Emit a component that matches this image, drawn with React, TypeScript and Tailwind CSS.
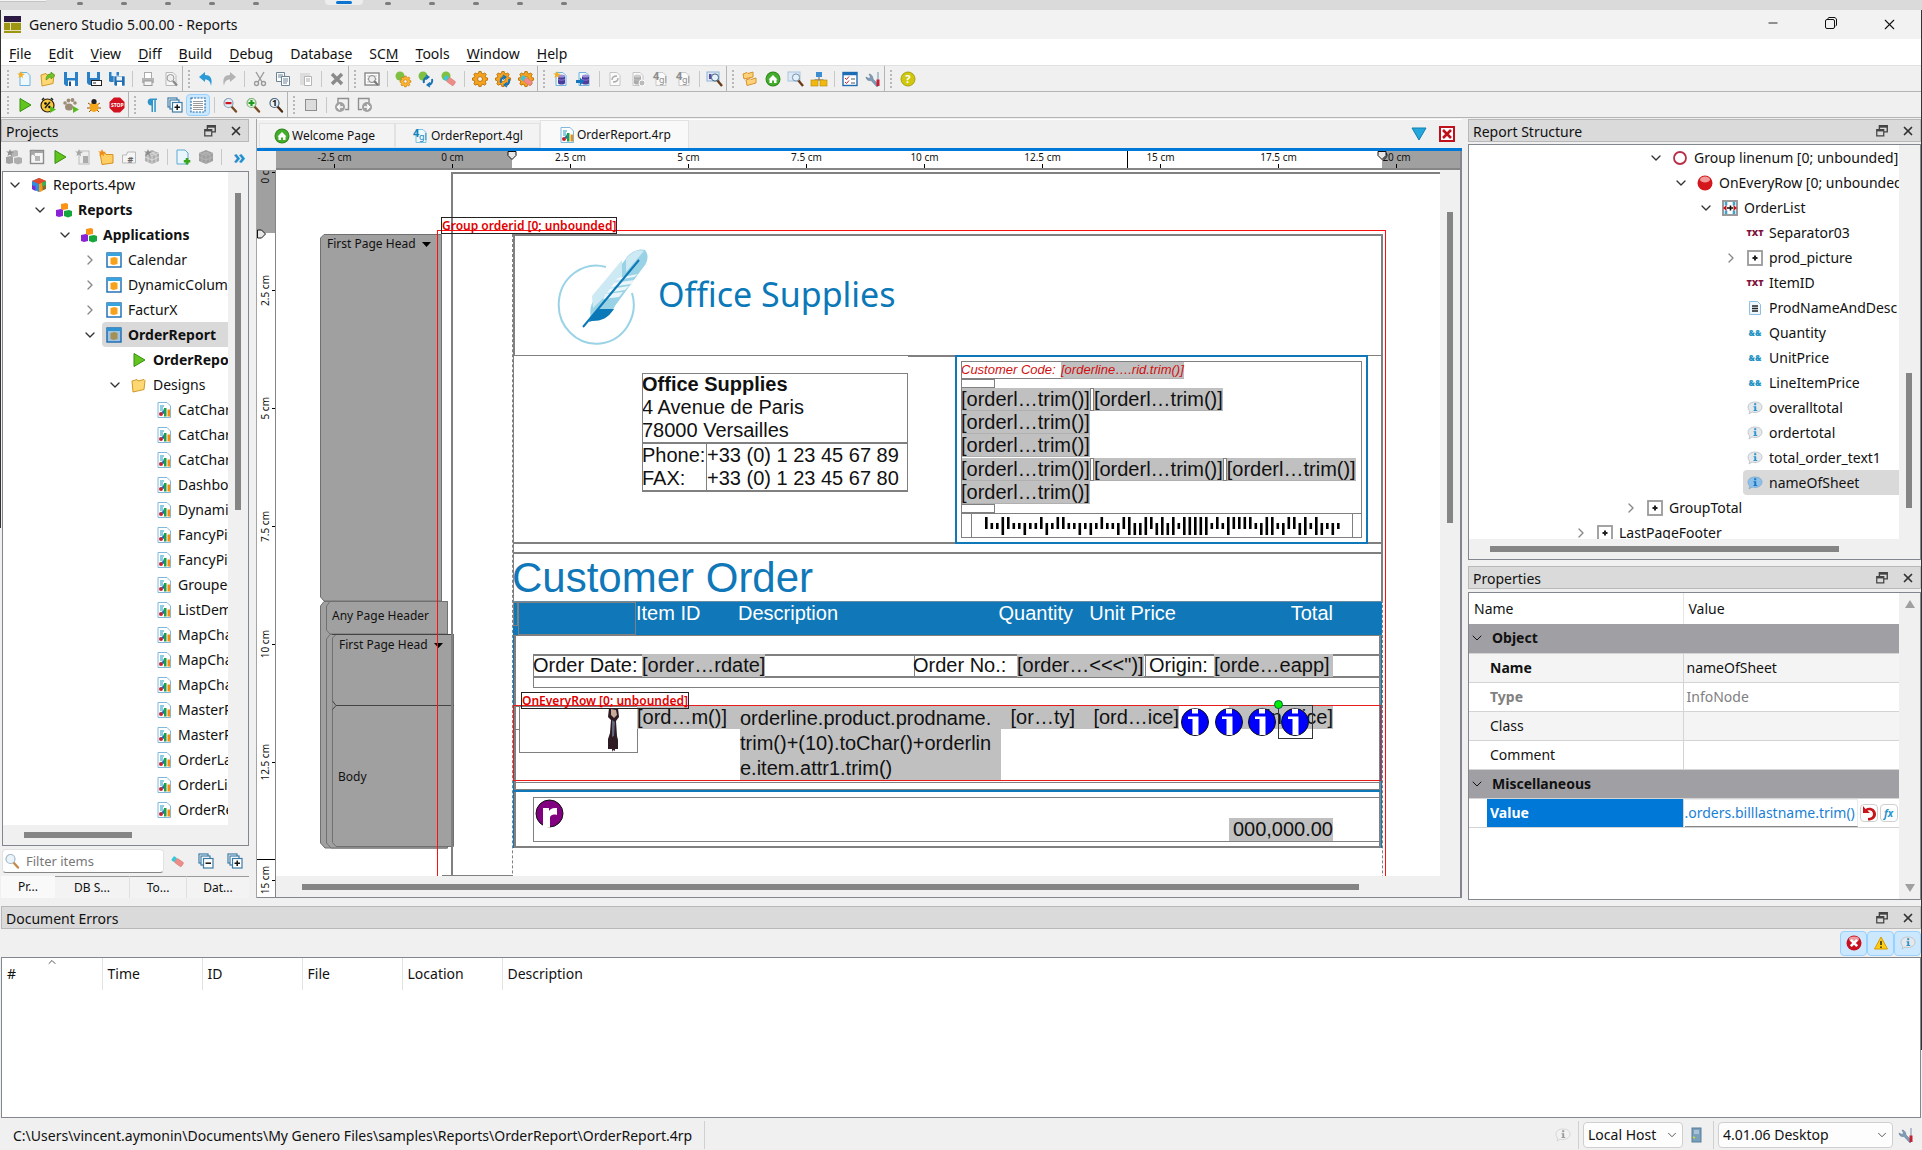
import React from 'react';
import { ChevronDown, ChevronRight, ChevronUp, X, Minus } from 'lucide-react';

/* ---------- Icons (16 x 16 grid) ---------- */

const page = (fill: string, stroke: string) => (
  <path d="M3 1.5h7l3 3v10H3z" fill={fill} stroke={stroke} />
);

const gear = (x: number, y: number, s: number, fill: string, stroke: string) => (
  <g transform={`translate(${x} ${y}) scale(${s})`}>
    <path
      d="M6.8 0h2.4l.5 2 1.5.6L13 1.5 14.6 3.200 13.500 5l.5 1.500 2 .4v2.300l-2 .5-.6 1.500 1.100 1.800-1.700 1.600-1.700-1.100-1.500.6-.5 1.900H6.800l-.5-1.900-1.500-.6-1.800 1.100L1.400 13l1.100-1.800L1.900 9.700 0 9.200V6.900l1.900-.4.6-1.500L1.400 3.200 3 1.500l1.800 1.100 1.500-.6z"
      fill={fill}
      stroke={stroke}
    />
    <circle cx="8" cy="8" r="2.6" fill="#f3f3f3" stroke={stroke} />
  </g>
);

const recycle = (
  <g fill="none" stroke="#1672b5" strokeWidth="2">
    <path d="M6 12c-1-3 1-6 4-6" />
    <path d="M14 8c1 3-1 6-4 6" />
    <path d="M8 4l3 2-3 2.500M12 16l-3-2 3-2.500" strokeWidth="1.200" />
  </g>
);

const eraser = (x: number, y: number) => (
  <g transform={`translate(${x} ${y}) rotate(35)`}>
    <rect x="0" y="0" width="4" height="5" rx="1" fill="#3cc6d8" />
    <rect x="4" y="0" width="8" height="5" rx="1" fill="#ee8d88" stroke="#d4706b" strokeWidth=".5" />
  </g>
);

const lens = (fill: string, stroke: string, handle: string) => (
  <>
    <path d="M9.500 9.500l4.500 5" stroke={handle} strokeWidth="2.400" strokeLinecap="round" />
    <circle cx="6.500" cy="6" r="4.500" fill={fill} stroke={stroke} strokeWidth="1.200" />
  </>
);

const cylinder = (x: number, fill: string, top: string) => (
  <g transform={`translate(${x} 0)`}>
    <path d="M3 5v7c0 2 7 2 7 0V5z" fill={fill} />
    <ellipse cx="6.500" cy="5" rx="3.500" ry="1.600" fill={top} />
    <path d="M3 8c0 1.500 7 1.500 7 0" fill="none" stroke={top} strokeWidth=".8" />
  </g>
);

const sparkle = (fill: string) => <path d="M4 0l1 2.500L8 3 5.500 4.500 6 7.500 4 5.500 1.500 7l.8-3L0 2.500 3 2.500z" fill={fill} />;

const cubes = (a: string, b: string, c: string) => (
  <>
    <path d="M5 2l5-1 2 1v5l-5 1-2-1z" fill={a} />
    <path d="M0 8l5-1 2 1v6l-4 1-3-1z" fill={b} />
    <path d="M8 9l5-1 3 1v5l-4 1.500-4-1.500z" fill={c} />
  </>
);

const gridBox = (fill: string, stroke: string) => (
  <>
    <path d="M1 4l7-3 7 3v8l-7 3-7-3z" fill={fill} />
    <path d="M1 4l7 2.500L15 4M8 6.500V15M4 2.500l8 3v8M12 2.500l-8 3v8M1 8l7 3 7-3" fill="none" stroke={stroke} strokeWidth=".8" />
  </>
);

const infoBubble = (fill: string, stroke: string, dot: string) => (
  <>
    <path d="M8 2c4 0 7 2 7 5s-3 5.500-7 5.500c-1 0-2 0-3-.4L2 14l.8-3C1.500 10 1 8.500 1 7c0-3 3-5 7-5z" fill={fill} stroke={stroke} strokeWidth=".8" />
    <rect x="7.200" y="3.200" width="2" height="2" fill={dot} />
    <path d="M6.500 6.200h2.700V10h1v1H6.500v-1h.8V7.200h-.8z" fill={dot} />
  </>
);

const reportPage = (
  <>
    <path d="M2 .5h9l3.500 3.500v11.500H2z" fill="#fff" stroke="#7fb8dc" />
    <path d="M4 4h4M4 6h3M4 8h4" stroke="#1e9ac0" strokeWidth="1.200" />
    <circle cx="5" cy="12" r="2" fill="#c8242a" />
    <path d="M5 10.500L8 8v4z" fill="#2b6ca8" />
    <rect x="8" y="6" width="2.500" height="8.500" fill="#19a04b" />
    <rect x="11.500" y="7.500" width="2.500" height="7" fill="#f58a0b" />
  </>
);

const folder = (
  <path d="M1 4l5-1.500 1 1.500 6-1.500 1 1-1 9L2 15z" fill="#ffd874" stroke="#cf9a2a" />
);

const stack = (sign: string) => (
  <g fill="#fff" stroke="#3c7ba6" strokeWidth="1.200">
    <rect x="1" y="1" width="9" height="9" />
    <rect x="3" y="3" width="9" height="9" />
    <rect x="5.500" y="5.500" width="9.500" height="9.500" />
    <path d={sign} stroke="#111" strokeWidth="1.500" />
  </g>
);

const icons = {
  newFile: <>{page('#eef8fd', '#6fb3da')}{sparkle('#f2b01e')}</>,
  open: <>{folder}<path d="M6 9c0-4 2-6 5-6V1l4 3.500L11 8V6C9 6 8 8 6 9z" fill="#6fc52a" stroke="#3c8a14" strokeWidth=".6" /></>,
  save: <><path d="M1 1h14v14H3l-2-2z" fill="#2b7fc4" /><rect x="4" y="1" width="8" height="6" fill="#e9f1f8" /><rect x="5" y="9.500" width="7" height="5.500" fill="#fff" /><rect x="6" y="10.500" width="2" height="4.500" fill="#1c4f80" /></>,
  saveAs: <><path d="M1 1h13v13H3l-2-2z" fill="#2b7fc4" /><rect x="4" y="1" width="7" height="6" fill="#e9f1f8" /><rect x="5.500" y="9.500" width="10" height="5" fill="#fff" stroke="#222" /><path d="M7 12h3" stroke="#222" /></>,
  saveAll: <><path d="M0 1h10v10H1l-1-1z" fill="#2b7fc4" /><rect x="2.500" y="1" width="5" height="4" fill="#e9f1f8" /><path d="M5 5h11v10H6l-1-1z" fill="#1f6db0" stroke="#fff" strokeWidth=".6" /><rect x="7.500" y="5.500" width="5.500" height="4" fill="#e9f1f8" /><rect x="8" y="11" width="5" height="4" fill="#fff" /></>,
  print: <><rect x="4.500" y="1.500" width="7" height="6" fill="#fff" stroke="#aaa" /><path d="M2 7h12v5H2z" fill="#b5b5b5" /><rect x="4" y="10" width="8" height="4.500" fill="#f4f4f4" stroke="#999" /></>,
  preview: <>{page('#f6f6f6', '#b9b9b9')}<path d="M10 10l4 4.500" stroke="#888" strokeWidth="2.200" /><circle cx="7.500" cy="7" r="3.500" fill="#eee" stroke="#999" /></>,
  undo: <path d="M1 6l6-5v3c5 0 8 3 6 11-.5-4-2-6.500-6-6.500V11z" fill="#2b9bd6" />,
  redo: <path d="M15 6L9 1v3C4 4 1 7 3 15c.5-4 2-6.500 6-6.500V11z" fill="#b3b3b3" />,
  cut: <g fill="none" stroke="#9b9b9b" strokeWidth="1.400"><path d="M4 1l6 10M12 1L6 11" /><circle cx="4.500" cy="12.500" r="2" /><circle cx="11.500" cy="12.500" r="2" /></g>,
  copy: <g fill="#fff" stroke="#6c8397"><path d="M1.500 1.500h8v9h-8z" /><path d="M3 4h5M3 6h5" /><path d="M6.500 5.500h8v9h-8z" /><path d="M8 8h5M8 10h5M8 12h4" /></g>,
  paste: <><rect x="2" y="2" width="10" height="12" fill="#ddd" /><path d="M6.500 5.500h7v9h-7z" fill="#fff" stroke="#b5b5b5" /><path d="M8 8h4M8 10h4" stroke="#aaa" /></>,
  del: <path d="M3 3l10 10M13 3L3 13" stroke="#8a8a8a" strokeWidth="3.400" />,
  find: <><rect x="1" y="2" width="14" height="12" fill="#fff" stroke="#888" strokeWidth="1.400" /><path d="M3 5h10M3 8h10M3 11h10" stroke="#bbb" /><circle cx="8" cy="8" r="3.500" fill="#eee" stroke="#888" /><path d="M10 10l4 4" stroke="#777" strokeWidth="2" /></>,
  buildOne: <><circle cx="5" cy="5" r="4.500" fill="#7fc043" />{gear(5, 5, 0.68, '#ffb52e', '#c47b08')}</>,
  rebuildOne: <><circle cx="5" cy="5" r="4.500" fill="#7fc043" />{recycle}</>,
  cleanOne: <><circle cx="5" cy="5" r="4.500" fill="#7fc043" />{eraser(5, 4)}</>,
  buildAll: gear(0.5, 0.5, 0.94, '#f5a21f', '#bc7206'),
  rebuildAll: <>{gear(0.5, 0.5, 0.94, '#f5a21f', '#bc7206')}{recycle}</>,
  cleanAll: <>{gear(0.5, 0.5, 0.94, '#f5a21f', '#bc7206')}{eraser(5, 4)}</>,
  dbNew: <>{page('#eef8fd', '#6fb3da')}{cylinder(2, '#4d3c9c', '#9d90d8')}{sparkle('#f2b01e')}</>,
  dbImport: <>{page('#eef8fd', '#6fb3da')}{cylinder(3, '#4d3c9c', '#9d90d8')}<path d="M0 9h4V6.500L8 10.500 4 14.500V12H0z" fill="#1673bd" /></>,
  pageSync: <>{page('#fafafa', '#c5c5c5')}<path d="M5 9c0-3 2-4 5-4M11 7c0 3-2 4-5 4" fill="none" stroke="#aaa" strokeWidth="1.400" /></>,
  dbGray: <>{page('#fafafa', '#c5c5c5')}{cylinder(1, '#aaa', '#ccc')}<circle cx="12" cy="12" r="3" fill="#bbb" stroke="#fff" /></>,
  fglGray: <>{page('#fafafa', '#c9c9c9')}<text x="0" y="9" fontSize="11" fontWeight="700" fill="#8d8d8d">4</text><text x="6" y="12" fontSize="9" fill="#8d8d8d">gl</text></>,
  fgl: <>{page('#eef8fd', '#7cc0e0')}<text x="0" y="9" fontSize="11" fontWeight="700" fill="#1684b8">4</text><text x="6" y="12" fontSize="9" fill="#1684b8">gl</text></>,
  dbFind: <><rect x="0" y="1" width="12" height="9" fill="#dfe9f5" stroke="#8eb4d8" /><rect x="2" y="3" width="2.500" height="5" fill="#5a4ba5" /><path d="M10 9l5 6" stroke="#6d3a17" strokeWidth="2.400" /><circle cx="8" cy="6.500" r="3.600" fill="#e3f1fb" stroke="#44617c" /></>,
  codeFind: <><rect x="0" y="1" width="12" height="9" fill="#dfe9f5" stroke="#a9c6e0" /><path d="M10 9l5 6" stroke="#6d3a17" strokeWidth="2.400" /><circle cx="8" cy="6.500" r="3.600" fill="#e3f1fb" stroke="#7592ac" /></>,
  folders: <g fill="#ffd27a" stroke="#d6922e"><path d="M1 3l4-1.500 1 1L11 1v5L2 8z" /><path d="M4 9l4-1.500 1 1 5-1.500v5l-9 2.500z" /></g>,
  home: <><circle cx="8" cy="8" r="7.500" fill="#2f8a1c" /><circle cx="8" cy="8" r="6.500" fill="#45ad2e" /><path d="M3.500 8.500L8 4l4.500 4.500H11.500V12H9V9.500H7V12H4.500V8.500z" fill="#fff" /></>,
  diagram: <><path d="M8 6v3M3.500 11V9h9v2" stroke="#666" fill="none" /><rect x="5" y="1" width="6" height="5" fill="#3b8ed2" /><rect x="0" y="9" width="7" height="6" fill="#f1b90f" stroke="#b5860a" strokeWidth=".6" /><rect x="9" y="9" width="7" height="6" fill="#f1b90f" stroke="#b5860a" strokeWidth=".6" /></>,
  checklist: <><rect x="1" y="1.500" width="14" height="13" fill="#fff" stroke="#1d6cb4" strokeWidth="1.400" /><path d="M1 3h14" stroke="#1d6cb4" strokeWidth="2.500" /><path d="M3 7l1.500 1.500L7 5.500M3 11l1.500 1.500L7 9.500" fill="none" stroke="#c4202a" /><path d="M9 8h4M9 12h4" stroke="#555" /></>,
  tools: <><path d="M1 4c0 3 3 4 5 3.500L12 14l2-2-6-6C8 3 6 1 4 1l1.500 3L4 5.500z" fill="#7e9cb8" stroke="#58738c" strokeWidth=".5" transform="translate(0 2)" /><path d="M13 1v8" stroke="#8aa0b5" strokeWidth="1.200" /><rect x="11.500" y="8.500" width="3" height="6.500" fill="#c61f33" /></>,
  help: <><circle cx="8" cy="8" r="7" fill="#cfc80f" stroke="#aaa20a" /><text x="5.200" y="12" fontSize="11" fontWeight="700" fill="#fff">?</text></>,
  play: <path d="M3 1.500l11 6.500L3 14.500z" fill="#62c41e" stroke="#378f10" />,
  profile: <><circle cx="7.500" cy="8.500" r="6.500" fill="#f5c63e" stroke="#33200a" strokeWidth="1.200" /><path d="M2 3l2-2M11 1l2 2M5 11l5-6" stroke="#222" strokeWidth="1.600" /><circle cx="5.500" cy="6.500" r="1.300" /><circle cx="9.500" cy="10" r="1.300" /><path d="M10 9l6 3.500-6 3.500z" fill="#58bb1c" /></>,
  paws: <><g fill="#9d8c78"><ellipse cx="6" cy="10" rx="4" ry="3.500" /><circle cx="2" cy="6" r="1.800" /><circle cx="5.500" cy="3.500" r="1.900" /><circle cx="9.500" cy="3" r="1.900" /><circle cx="12" cy="6" r="1.800" /></g><path d="M10 9l6 3.500-6 3.500z" fill="#58bb1c" /></>,
  bug: <><path d="M2 6l3 2M14 6l-3 2M1 11h4M15 11h-4M3 15l3-3M13 15l-3-3" stroke="#8a5200" /><ellipse cx="8" cy="10" rx="4.500" ry="5" fill="#f7a51b" /><circle cx="8" cy="4.500" r="2.600" fill="#222" /></>,
  stop: <><path d="M5 .5h6L15.500 5v6L11 15.500H5L.5 11V5z" fill="#d3121f" /><text x="2" y="10" fontSize="5" fontWeight="700" fill="#fff">STOP</text></>,
  pilcrow: <path d="M7 1.500h6v1.500h-1.200V15h-1.500V3H9v12H7.500V8.500C2.500 8.500 2.500 1.500 7 1.500z" fill="#2f93cc" />,
  stackPlus: stack('M10.200 7.500v5.500M7.500 10.200H13'),
  stackMinus: stack('M7.500 10.200H13'),
  select: <><rect x="1" y="1" width="14" height="14" fill="#fff" stroke="#1f6ba6" strokeWidth="1.200" strokeDasharray="2 1.200" /><path d="M3 4.500h10M3 6.500h10M3 8.500h10M3 10.500h10M3 12.500h10" stroke="#9a9a9a" /></>,
  zoomOut: <>{lens('#e4eef7', '#8ba0b5', '#7a4a21')}<rect x="3.500" y="5" width="6" height="2.200" fill="#cf1420" /></>,
  zoomIn: <>{lens('#e4f4e0', '#7fae77', '#7a4a21')}<path d="M6.500 3v6M3.500 6h6" stroke="#1d9b1f" strokeWidth="2.200" /></>,
  zoomOne: <>{lens('#eaf4fb', '#4c6379', '#4d2a10')}<text x="4" y="9.200" fontSize="9" fontWeight="700" fill="#111">1</text></>,
  square: <rect x="2.500" y="2.500" width="11" height="11" fill="#dcdcdc" stroke="#8e8e8e" />,
  prev: <><path d="M4 6V1.500h10.500v11H11" fill="none" stroke="#8f8f8f" strokeWidth="1.400" /><circle cx="6" cy="10" r="5" fill="#a0a0a0" /><path d="M9 10H4M6 7.500L3.500 10 6 12.500" stroke="#fff" fill="none" strokeWidth="1.400" /></>,
  next: <><path d="M12 6V1.500H1.500v11H5" fill="none" stroke="#8f8f8f" strokeWidth="1.400" /><circle cx="10" cy="10" r="5" fill="#a0a0a0" /><path d="M7 10h5M10 7.500l2.500 2.500L10 12.500" stroke="#fff" fill="none" strokeWidth="1.400" /></>,
  cubesGray: <>{cubes('#b5b5b5', '#a2a2a2', '#aeaeae')}{sparkle('#8d8d8d')}</>,
  cubes: cubes('#fb9313', '#8b22d6', '#13a63c'),
  windowNew: <><rect x="1.500" y="1.500" width="13" height="13" fill="#f5f5f5" stroke="#8c8c8c" strokeWidth="1.400" /><path d="M2 3h12" stroke="#a5a5a5" strokeWidth="2" /><path d="M6 7h5v5H6z" fill="#b5b5b5" />{sparkle('#a5a5a5')}</>,
  pageAdd: <><rect x="4" y="2" width="10" height="13" fill="#eee" stroke="#bbb" /><rect x="8" y="7" width="5" height="7" fill="#aaa" />{sparkle('#a5a5a5')}</>,
  folderNew: <><path d="M2 4h5l1 1.500h7V14l-11 1.500z" fill="#ffcf63" stroke="#d98e1d" />{sparkle('#f08a12')}</>,
  folderHash: <><path d="M1.500 6h4l1-3h8v11h-13z" fill="#f5f5f5" stroke="#b9b9b9" /><text x="6.500" y="14" fontSize="9" fontWeight="700" fill="#666">#</text></>,
  boxGray: <>{gridBox('#aeaeae', '#e2e2e2')}{sparkle('#8d8d8d')}</>,
  boxGray2: gridBox('#9f9f9f', '#b9b9b9'),
  addFile: <><path d="M2 1h8l3 3v11H2z" fill="#eaf6fd" stroke="#5fa9d4" /><path d="M12 9v6.500M8.800 12.200h6.500" stroke="#3aa61b" strokeWidth="2.600" /></>,
  workspace: <><path d="M1 4l7-3v14l-7-3z" fill="#2f8ddb" /><path d="M8 1l7 3v8l-7 3z" fill="#8a6a2f" /><path d="M1 4l7-3 7 3-7 3z" fill="#e5482b" /><path d="M1 8l3.500 1.500V14L1 12z" fill="#7b2bd1" /><path d="M8 7l3.500-1.500V14L8 15z" fill="#f59a17" /><path d="M11.500 5.500L15 4v4l-3.500 1.500z" fill="#2fb457" /></>,
  app: <><rect x="1" y="1" width="14" height="14" fill="#fff" stroke="#1769b0" strokeWidth="1.400" /><path d="M1 2.500h14" stroke="#38a3dd" strokeWidth="3" /><path d="M4.500 6l4-1 3 1v6l-4 1-3-1z" fill="#f8a11a" /></>,
  appDim: <><rect x="1" y="1" width="14" height="14" fill="#9fc3e0" stroke="#1769b0" strokeWidth="1.400" /><path d="M1 2.500h14" stroke="#2f93d0" strokeWidth="3" /><path d="M4.500 6l4-1 3 1v6l-4 1-3-1z" fill="#a58f54" /></>,
  folder,
  report: reportPage,
  eraser: eraser(4, 3),
  search: lens('#eaf4fb', '#a5b6c5', '#c68a4c'),
  ring: <circle cx="8" cy="8" r="6" fill="#fff" stroke="#b53048" strokeWidth="1.800" />,
  ball: <><circle cx="8" cy="8" r="7.500" fill="#d3171c" /><ellipse cx="8" cy="4.500" rx="5" ry="3" fill="#f09a9a" /></>,
  hbox: <><rect x="1" y="1" width="14" height="14" fill="#fff" stroke="#9a9a9a" strokeWidth="2" /><path d="M4 2v3.500M4 10.500V14M12 2v3.500M12 10.500V14" stroke="#3ba4d0" strokeWidth="2.600" /><path d="M5 8h6M8.500 5.500v5" stroke="#111" strokeWidth="1.600" /><path d="M1 8l3.500-3v6zM15 8l-3.500-3v6z" fill="#c8141c" /></>,
  vbox: <><rect x="1" y="1" width="14" height="14" fill="#fff" stroke="#9a9a9a" strokeWidth="1.800" /><path d="M8 5.500v5M5.500 8h5" stroke="#222" strokeWidth="2" /></>,
  doc: <><path d="M2.500 1.500h8l3 3v10h-11z" fill="#eef8fd" stroke="#8cc0de" /><path d="M5 6h6M5 8.500h6M5 11h6" stroke="#222" strokeWidth="1.300" /></>,
  info: infoBubble('#e6e9ec', '#b9bec3', '#2f93cc'),
  infoBlue: infoBubble('#8dc0ea', '#7fa9cb', '#1c74c0'),
  infoGray: infoBubble('#f2f2f2', '#cfcfcf', '#9b9b9b'),
  error: <><circle cx="8" cy="8" r="7.500" fill="#c9101e" /><ellipse cx="8" cy="4" rx="5" ry="2.600" fill="#ec9aa2" /><path d="M4.800 4.800l6.400 6.400M11.200 4.800l-6.400 6.400" stroke="#fff" strokeWidth="2.600" /></>,
  warning: <><path d="M8 2l6.500 12h-13z" fill="#ffcf0f" stroke="#d69a07" /><path d="M8 6v4M8 11.500V13" stroke="#333" strokeWidth="1.600" /></>,
  revert: <path d="M2 1v7h7L6.500 5.700C9 4.500 12 6 12 9c0 2.500-2 4-5 4v2.500c5 0 8-2.500 8-6.500 0-5-6-8-10.500-5z" fill="#c9141b" />,
  server: <><rect x="4" y="1" width="9" height="14" fill="#7ba0bd" stroke="#5b7c97" /><path d="M6 4h5M6 6h5" stroke="#d5e5f1" /><path d="M5 10l2 1" stroke="#c9dd2e" strokeWidth="1.600" /></>,
  restore: <><path d="M5 2h9v7H5z" fill="none" stroke="#444" strokeWidth="1.600" /><path d="M5 3h9" stroke="#444" strokeWidth="2.400" /><path d="M2 6.500h8v7H2z" fill="#dadada" stroke="#444" strokeWidth="1.400" /><path d="M2 7.500h8" stroke="#444" strokeWidth="2" /></>,
};

type IconName = keyof typeof icons;

function Icon({ name }: { name: IconName }) {
  return (
    <svg viewBox="0 0 16 16" className="w-4 h-4 shrink-0 overflow-visible" aria-hidden="true">
      {icons[name]}
    </svg>
  );
}

/* ---------- Toolbars ---------- */

type Tool = IconName | '|';

const topTools: Tool[][] = [
  ['newFile', 'open', 'save', 'saveAs', 'saveAll', '|', 'print', 'preview'],
  ['undo', 'redo', '|', 'cut', 'copy', 'paste', '|', 'del'],
  ['find', '|', 'buildOne', 'rebuildOne', 'cleanOne', '|', 'buildAll', 'rebuildAll', 'cleanAll'],
  ['dbNew', 'dbImport', '|', 'pageSync', 'dbGray', 'fglGray', 'fglGray', '|', 'dbFind'],
  ['folders', 'home', 'codeFind', 'diagram', '|', 'checklist', 'tools'],
  ['help'],
];

const runTools: Tool[][] = [
  ['play', 'profile', 'paws', 'bug', 'stop'],
  ['pilcrow', 'stackPlus', 'select', '|', 'zoomOut', 'zoomIn', 'zoomOne'],
  ['square', '|', 'prev', 'next'],
];

const projectTools: Tool[] = ['cubesGray', 'windowNew', 'play', 'pageAdd', 'folderNew', 'folderHash', 'boxGray', '|', 'addFile', 'boxGray2', '|'];

function ToolButtons({ tools }: { tools: Tool[] }) {
  return (
    <>
      {tools.map((tool, i) =>
        tool === '|' ? (
          <span key={i} className="w-2 h-4 flex justify-center shrink-0">
            <span className="w-px bg-[#c8c8c8]" />
          </span>
        ) : (
          <button
            key={i}
            aria-label={tool}
            className={`h-[22px] flex items-center justify-center shrink-0 ${
              tool === 'select' ? 'w-6 bg-[#cce8ff] border border-[#99d1ff] rounded-sm' : 'w-[23px]'
            }`}
          >
            <Icon name={tool} />
          </button>
        )
      )}
    </>
  );
}

function Toolbar({ groups }: { groups: Tool[][] }) {
  return (
    <div className="flex h-[26px] pl-[2px] bg-[#f0f0f0] border-b border-[#b4b4b4]">
      {groups.map((tools, i) => (
        <div key={i} className={`flex items-center ${i < groups.length - 1 ? 'border-r border-[#b4b4b4]' : ''}`}>
          <span className="w-[11px] flex justify-center">
            <span className="h-[18px] border-l-2 border-dotted border-[#b8b8b8]" />
          </span>
          <ToolButtons tools={tools} />
        </div>
      ))}
    </div>
  );
}

/* ---------- Docks and trees ---------- */

function DockTitle({ title }: { title: string }) {
  return (
    <div className="flex items-center h-[23px] shrink-0 bg-[#dadada] border border-[#b8b8b8] pl-1 pr-[5px]">
      <h2 className="flex-1 pt-[3px]">{title}</h2>
      <button aria-label={`Float ${title}`} className="w-4 mr-[10px]">
        <svg viewBox="0 0 16 16" className="w-[14px] h-[14px]">{icons.restore}</svg>
      </button>
      <button aria-label={`Close ${title}`}>
        <X className="w-[14px] h-[14px] text-[#333]" strokeWidth={3} />
      </button>
    </div>
  );
}

type Node = {
  depth: number;
  label: string;
  icon: IconName | 'txt' | 'amp';
  state?: 'open' | 'closed';
  bold?: boolean;
  selected?: boolean;
};

const projectTree: Node[] = [
  { depth: 0, label: 'Reports.4pw', icon: 'workspace', state: 'open' },
  { depth: 1, label: 'Reports', icon: 'cubes', state: 'open', bold: true },
  { depth: 2, label: 'Applications', icon: 'cubes', state: 'open', bold: true },
  { depth: 3, label: 'Calendar', icon: 'app', state: 'closed' },
  { depth: 3, label: 'DynamicColumns', icon: 'app', state: 'closed' },
  { depth: 3, label: 'FacturX', icon: 'app', state: 'closed' },
  { depth: 3, label: 'OrderReport', icon: 'appDim', state: 'open', bold: true, selected: true },
  { depth: 4, label: 'OrderReport', icon: 'play', bold: true },
  { depth: 4, label: 'Designs', icon: 'folder', state: 'open' },
  ...[
    'CatChart', 'CatChart', 'CatChart', 'Dashboard', 'Dynamic', 'FancyPivot', 'FancyPivot', 'Grouped', 'ListDemo',
    'MapChart', 'MapChart', 'MapChart', 'MasterReport', 'MasterReport', 'OrderLabels', 'OrderList', 'OrderReport',
  ].map((label): Node => ({ depth: 5, label, icon: 'report' })),
];

const reportTree: Node[] = [
  { depth: 7, label: 'Group linenum [0; unbounded]', icon: 'ring', state: 'open' },
  { depth: 8, label: 'OnEveryRow [0; unbounded]', icon: 'ball', state: 'open' },
  { depth: 9, label: 'OrderList', icon: 'hbox', state: 'open' },
  { depth: 10, label: 'Separator03', icon: 'txt' },
  { depth: 10, label: 'prod_picture', icon: 'vbox', state: 'closed' },
  { depth: 10, label: 'ItemID', icon: 'txt' },
  { depth: 10, label: 'ProdNameAndDesc', icon: 'doc' },
  { depth: 10, label: 'Quantity', icon: 'amp' },
  { depth: 10, label: 'UnitPrice', icon: 'amp' },
  { depth: 10, label: 'LineItemPrice', icon: 'amp' },
  { depth: 10, label: 'overalltotal', icon: 'info' },
  { depth: 10, label: 'ordertotal', icon: 'info' },
  { depth: 10, label: 'total_order_text1', icon: 'info' },
  { depth: 10, label: 'nameOfSheet', icon: 'infoBlue', selected: true },
  { depth: 6, label: 'GroupTotal', icon: 'vbox', state: 'closed' },
  { depth: 4, label: 'LastPageFooter', icon: 'vbox', state: 'closed' },
];

function Tree({ nodes }: { nodes: Node[] }) {
  return (
    <ul className="flex-1 min-w-0 overflow-hidden bg-white">
      {nodes.map((node, i) => (
        <li key={i} className="flex h-[25px] whitespace-nowrap" style={{ paddingLeft: node.depth * 25 }}>
          <span className="w-6 flex items-center justify-center shrink-0">
            {node.state === 'open' && <ChevronDown className="w-4 h-4 text-[#333]" strokeWidth={2} />}
            {node.state === 'closed' && <ChevronRight className="w-4 h-4 text-[#888]" strokeWidth={2} />}
          </span>
          <span className={`flex flex-1 items-center gap-[6px] pl-1 rounded-l-sm ${node.selected ? 'bg-[#d9d9d9]' : ''} ${node.bold ? 'font-bold' : ''}`}>
            {node.icon === 'txt' ? (
              <span className="w-4 flex justify-center text-[9px] font-black text-[#7d1139]">TXT</span>
            ) : node.icon === 'amp' ? (
              <span className="w-4 flex justify-center text-[8px] font-black text-[#1f93c4]">&amp;&amp;</span>
            ) : (
              <Icon name={node.icon} />
            )}
            <span className="pt-px">{node.label}</span>
          </span>
        </li>
      ))}
    </ul>
  );
}

function ProjectsDock() {
  return (
    <aside className="w-[248px] flex flex-col">
      <DockTitle title="Projects" />
      <div className="flex items-center h-[29px] pl-px shrink-0">
        <ToolButtons tools={projectTools} />
        <button className="flex-1 pl-[5px] text-center text-[20px] leading-5 font-bold text-[#1f8fd0]">»</button>
      </div>
      <div className="flex-1 min-h-0 flex flex-col ml-px border border-[#82878f] bg-[#f0f0f0]">
        <div className="flex flex-1 min-h-0">
          <Tree nodes={projectTree} />
          <div className="w-5 pl-[7px] pt-[21px]">
            <div className="w-[6px] h-[317px] bg-[#858585]" />
          </div>
        </div>
        <div className="h-5 pl-[21px] pt-[7px]">
          <div className="w-[108px] h-[6px] bg-[#858585]" />
        </div>
      </div>
      <div className="flex items-center h-[30px] shrink-0 pl-px">
        <label className="flex items-center gap-[6px] w-[162px] h-6 bg-white border border-[#e2e2e2] border-b-[#868686] pl-px rounded-sm">
          <Icon name="search" />
          <input type="text" placeholder="Filter items" aria-label="Filter items" className="w-full text-[13px] outline-none placeholder:text-[#787878]" />
        </label>
        <div className="flex flex-1 justify-around">
          <button aria-label="Clear filter"><Icon name="eraser" /></button>
          <button aria-label="Collapse all"><Icon name="stackMinus" /></button>
          <button aria-label="Expand all"><Icon name="stackPlus" /></button>
        </div>
      </div>
      <div className="flex h-[22px] shrink-0 text-[12px] mb-[2px]">
        <button className="w-[54px] bg-[#f9f9f9]">Pr...</button>
        <button className="w-[75px] border-t border-[#9a9a9a] border-r border-r-[#e0e0e0] bg-[#f3f3f3]">DB S...</button>
        <button className="w-[57px] border-t border-[#9a9a9a] border-r border-r-[#e0e0e0] bg-[#f3f3f3]">To...</button>
        <button className="flex-1 border-t border-[#9a9a9a] bg-[#f3f3f3]">Dat...</button>
      </div>
    </aside>
  );
}

/* ---------- Report designer canvas ---------- */

const rulerMarks = ['-2.5 cm', '0 cm', '2.5 cm', '5 cm', '7.5 cm', '10 cm', '12.5 cm', '15 cm', '17.5 cm', '20 cm'];

// Top left corner of the design surface in window coordinates
const ORIGIN = { x: 276, y: 170 };

const at = (x: number, y: number, width?: number, height?: number) => ({
  left: x - ORIGIN.x,
  top: y - ORIGIN.y,
  width,
  height,
});

type Frame = [x: number, y: number, w: number, h: number, style: string];

const GRAY = 'border border-[#808080]';
const THICK = 'border-2 border-[#808080]';

const frames: Frame[] = [
  [451, 172, 1100, 900, 'border-l-2 border-t-2 border-[#808080]'],
  [512, 234, 871, 900, 'border border-dashed border-[#808080]'],
  [442, 874, 71, 2, 'border-b border-[#808080]'],
  [513, 234, 870, 122, THICK + ' border-b'],
  [513, 355, 870, 189, 'border border-r-2 border-b-2 border-[#808080]'],
  [908, 355, 48, 2, 'bg-[#808080]'],
  [513, 543, 870, 11, 'border border-r-2 border-b-2 border-[#808080]'],
  [513, 553, 870, 50, 'border border-r-2 border-[#808080]'],
  [513, 601, 869, 247, 'border border-[#1078b8]'],
  [514, 634, 867, 214, THICK],
  [533, 654, 848, 24, 'border-2 border-l border-[#808080]'],
  [533, 677, 848, 11, GRAY],
  [914, 655, 232, 22, 'border-x border-[#808080]'],
  [515, 706, 5, 24, GRAY],
  [519, 706, 119, 47, GRAY],
  [514, 782, 867, 8, 'border-y border-[#808080]'],
  [513, 790, 867, 2, 'bg-[#1078b8]'],
  [533, 797, 848, 45, GRAY],
];

const barcode = 'ATTFATTDTTADTAATTDTDTATTDAFDDFADFDFTFFFFFTATFAAAATDFFTDAADFTFDTDT';

function Barcode() {
  return (
    <svg className="w-[355px] h-[18px]" viewBox="0 0 355 18" aria-label="barcode">
      {barcode.split('').map((bar, i) => {
        const top = bar === 'F' || bar === 'A' ? 0 : 6;
        const bottom = bar === 'F' || bar === 'D' ? 18 : 12;
        return <rect key={i} x={i * 5.5} y={top} width="2.6" height={bottom - top} />;
      })}
    </svg>
  );
}

function Field({ children }: { children: React.ReactNode }) {
  return <span className="bg-[#c0c0c0] border-b border-[#b0b0b0] h-[23px]">{children}</span>;
}

const Gap = () => <span className="w-1 h-[23px] border border-[#808080]" />;

function Feather() {
  return (
    <svg className="absolute" style={at(556, 246)} width="96" height="100" viewBox="0 0 96 100" aria-label="feather">
      <path d="M50 21A37.500 39 0 1 0 76 47" fill="none" stroke="#9bd3e6" strokeWidth="2" />
      <path d="M35 75c-2-12 0-18 6-26L69 14c5-9 15-12 20-10 5 6 2 14-3 19L59 60c-4 10-14 14-24 15z" fill="#9ad2e5" />
      <path d="M37 62l-1-12L66 14v20zM70 13c6-8 13-10 18-8L70 26z" fill="#cde9f3" />
      <path d="M62 32l20-4-4 3-18 3zM58 37l20-3-3 4-20 3zM54 43l19-3-4 4-18 3zM50 48l17-2-4 5-16 2z" fill="#fff" opacity=".8" />
      <path d="M33 76c4-8 6-12 11-13h14c-6 9-12 12-22 12z" fill="#0b78b8" />
      <path d="M27 81L83 14" stroke="#0b78b8" strokeWidth="2" />
    </svg>
  );
}

function SectionBands() {
  return (
    <>
      <svg className="absolute" style={at(320, 234)} width="136" height="616" viewBox="0 0 136 616" aria-hidden="true">
        <g fill="#a0a0a0" stroke="#707070">
          <path d="M4 .5h117.500V367H4l-3.500-4V4z" />
          <path d="M4 367.500h123.500V614H5l-4.500-5V372z" />
          <path d="M10 367.500h117.500V400H10l-3.500-4V372z" />
          <path d="M10 400.500h117.500V614H11l-4.500-5V405z" />
          <path d="M16 400.500h117.500V612.500H16l-3.500-4V404z" />
          <path d="M12 400.500h121.500M16 471.500h117.500M12.500 467l3.500 4.500-3.500 4" stroke="#444" />
        </g>
        <path d="M102 8h9l-4.500 5z" />
        <path d="M114 409h9l-4.500 5z" />
      </svg>
      <div className="absolute text-[12px] leading-[16px] overflow-hidden whitespace-nowrap" style={at(327, 236, 89, 16)}>First Page Header</div>
      <div className="absolute text-[12px] leading-[16px] whitespace-nowrap" style={at(332, 608)}>Any Page Header</div>
      <div className="absolute text-[12px] leading-[16px] overflow-hidden whitespace-nowrap" style={at(339, 637, 89, 16)}>First Page Header</div>
      <div className="absolute text-[12px] leading-[16px]" style={at(338, 769)}>Body</div>
    </>
  );
}

function TriggerLabel({ x, y, text }: { x: number; y: number; text: string }) {
  return (
    <div className="absolute h-[17px] border border-[#222] text-[12px] leading-[15px] font-semibold text-[#e00000] whitespace-nowrap" style={at(x, y)}>
      {text}
    </div>
  );
}

function InfoMark({ x }: { x: number }) {
  return (
    <svg className="absolute" style={at(x, 708)} width="28" height="28" viewBox="0 0 28 28" aria-hidden="true">
      <circle cx="14" cy="14" r="13.500" fill="#00f" stroke="#111" />
      <path d="M11 .8h6v4.700h-6zM7 8.500h10.500V27h-6V11H7z" fill="#fff" />
    </svg>
  );
}

function Canvas() {
  return (
    <div className="relative flex-1 min-w-0 overflow-hidden bg-white font-['Liberation_Sans',Arial,sans-serif] text-[20px] leading-[23px] text-[#111]">
      <div className="font-['Noto_Sans',sans-serif]">
        <SectionBands />
      </div>

      {frames.map(([x, y, w, h, style], i) => (
        <div key={i} className={`absolute ${style}`} style={at(x, y, w, h)} />
      ))}
      <div className="absolute border border-[#ff1010]" style={at(437, 230, 949, 900)} />
      <div className="font-['Noto_Sans',sans-serif]">
        <TriggerLabel x={441} y={217} text="Group orderid [0; unbounded]" />
      </div>

      {/* Page header */}
      <Feather />
      <div className="absolute font-['Noto_Sans',sans-serif] text-[34px] leading-[46px] text-[#0b78b8] whitespace-nowrap" style={at(658, 271)}>
        Office Supplies
      </div>

      <div className="absolute outline outline-[#808080] -outline-offset-1 whitespace-nowrap" style={at(642, 373, 266, 118)}>
        <p className="font-bold">Office Supplies</p>
        <p>4 Avenue de Paris</p>
        <p>78000 Versailles</p>
        <dl className="grid grid-cols-[65px_1fr] border-y-2 border-[#808080]">
          <dt className="border-r border-[#808080]">Phone:</dt>
          <dd>+33 (0) 1 23 45 67 89</dd>
          <dt className="border-r border-[#808080]">FAX:</dt>
          <dd>+33 (0) 1 23 45 67 80</dd>
        </dl>
      </div>

      <div className="absolute border-2 border-[#1078b8] bg-white p-1 whitespace-nowrap" style={at(955, 355, 413, 189)}>
        <div className="flex flex-col h-full outline outline-[#808080] -outline-offset-1">
          <div className="flex text-[13px] leading-[17px] italic text-[#d01010]">
            <span className="w-[100px] border-b border-[#808080]">Customer Code:</span>
            <span className="bg-[#c0c0c0] border-b border-[#b0b0b0]">[orderline….rid.trim()]</span>
          </div>
          <div className="w-[34px] h-[9px] border border-[#808080]" />
          <div className="flex"><Field>[orderl…trim()]</Field><Gap /><Field>[orderl…trim()]</Field></div>
          <div className="flex"><Field>[orderl…trim()]</Field></div>
          <div className="flex"><Field>[orderl…trim()]</Field></div>
          <div className="flex pt-px"><Field>[orderl…trim()]</Field><Gap /><Field>[orderl…trim()]</Field><Gap /><Field>[orderl…trim()]</Field></div>
          <div className="flex"><Field>[orderl…trim()]</Field></div>
          <div className="w-[34px] h-[9px] border border-[#808080]" />
          <div className="flex-1 border-t border-[#808080] pl-[10px] pr-[9px]">
            <div className="h-full border-x border-[#808080] flex items-center justify-center">
              <Barcode />
            </div>
          </div>
        </div>
      </div>

      <div className="absolute text-[42px] leading-[48px] text-[#1078b8] whitespace-nowrap" style={at(512, 554)}>Customer Order</div>

      {/* Column titles */}
      <div className="absolute flex bg-[#1078b8] text-white border-y border-[#808080] border-t-[#6b8ba3]" style={at(513, 601, 869, 35)}>
        <span className="w-[5px] h-6 border border-[#808080]" />
        <span className="w-[118px] border border-[#808080]" />
        <span className="w-[102px]">Item ID</span>
        <span className="w-[237px]">Description</span>
        <span className="w-[98px] text-right">Quantity</span>
        <span className="w-[103px] text-right">Unit Price</span>
        <span className="w-[157px] text-right">Total</span>
      </div>

      {/* Order line */}
      <div className="absolute flex whitespace-nowrap" style={at(533, 654)}>
        <span className="w-[109px]">Order Date:</span>
        <span className="w-[271px]"><span className="inline-block bg-[#c0c0c0]">[order…rdate]</span></span>
        <span className="w-[104px]">Order No.:</span>
        <span className="w-[132px]"><span className="inline-block bg-[#c0c0c0]">[order…&lt;&lt;&lt;")]</span></span>
        <span className="w-[65px]">Origin:</span>
        <span className="w-[119px] bg-[#c0c0c0]">[orde…eapp]</span>
      </div>

      {/* One row per item */}
      <div className="absolute flex items-start whitespace-nowrap" style={at(637, 706)}>
        <span className="w-[103px] bg-[#c0c0c0]">[ord…m()]</span>
        <span className="w-[261px] h-[74px] bg-[#c0c0c0] leading-[25px]">
          orderline.product.prodname.<br />trim()+(10).toChar()+orderlin<br />e.item.attr1.trim()
        </span>
        <span className="w-[74px] bg-[#c0c0c0] text-right">[or…ty]</span>
        <span className="w-[104px] bg-[#c0c0c0] text-right">[ord…ice]</span>
        <span className="w-[50px]" />
        <span className="w-[104px] bg-[#c0c0c0] text-right">[lin…ice]</span>
      </div>
      <svg className="absolute" style={at(606, 708)} width="16" height="44" viewBox="0 0 16 44" aria-hidden="true">
        <path d="M3 0h9l1 9-3 4 1 15 1 4v9H9v2l-2-1-1 2V41H2V31l2-6 1-13-3-3z" fill="#2e1a22" />
        <path d="M5 1l5 1 1 5-3 3-3-3z" fill="#c9a99a" />
        <path d="M6 12l3 2-1 14-2 1z" fill="#61667c" />
      </svg>
      <div className="absolute border border-[#e81c1c]" style={at(513, 705, 868, 76)} />
      <div className="font-['Noto_Sans',sans-serif]">
        <TriggerLabel x={521} y={692} text="OnEveryRow [0; unbounded]" />
      </div>
      <InfoMark x={1181} />
      <InfoMark x={1215} />
      <InfoMark x={1248} />
      <InfoMark x={1281} />
      <div className="absolute border border-[#333]" style={at(1278, 705, 35, 34)} />
      <div className="absolute w-[9px] h-[9px] rounded-full bg-[#00ee00] border border-[#064]" style={at(1274, 700)} />

      {/* Running total */}
      <svg className="absolute" style={at(535, 799)} width="29" height="29" viewBox="0 0 29 29" aria-hidden="true">
        <circle cx="14.500" cy="14.500" r="13.500" fill="#800080" stroke="#111" />
        <path d="M8 9h6v3c1-2 3-3.500 8-3v7c-4-1-6 0-7 2v10.500H8z" fill="#fff" />
      </svg>
      <div className="absolute bg-[#c0c0c0] text-right" style={at(1229, 818, 104)}>000,000.00</div>
    </div>
  );
}

function Designer() {
  return (
    <main className="flex-1 min-w-0 flex flex-col border-l border-[#a5a5a5]">
      <div className="flex items-end h-[29px] pl-[2px] text-[12px] border-t border-white">
        <button className="flex items-center gap-[2px] w-[136px] h-[25px] pl-[14px] bg-[#f3f3f3] border border-[#e2e2e2]"><Icon name="home" />Welcome Page</button>
        <button className="flex items-center gap-[2px] w-[145px] h-[25px] pl-[17px] bg-[#f3f3f3] border border-[#e2e2e2]"><Icon name="fgl" />OrderReport.4gl</button>
        <button className="flex items-center gap-[2px] w-[149px] h-[28px] pl-[18px] bg-[#f9f9f9] border border-b-0 border-[#e2e2e2]"><Icon name="report" />OrderReport.4rp</button>
        <div className="flex flex-1 self-center justify-end gap-3 pr-[7px]">
          <button aria-label="Document list">
            <svg viewBox="0 0 16 16" className="w-4 h-4"><path d="M1 2h14L8 14z" fill="#25a7dd" stroke="#1180b0" /></svg>
          </button>
          <button aria-label="Close document">
            <svg viewBox="0 0 16 16" className="w-4 h-4"><rect x="1" y="1" width="14" height="14" fill="#fff" stroke="#c0101c" strokeWidth="2" /><path d="M4 4l8 8M12 4l-8 8" stroke="#c0101c" strokeWidth="2.600" /></svg>
          </button>
        </div>
      </div>
      <div className="h-[3px] bg-[#0078d7] shrink-0" />

      <div className="flex flex-1 min-h-0 flex-col border-r-2 border-b border-[#82878f]">
        {/* Horizontal ruler */}
        <div className="flex h-[19px] shrink-0">
          <div className="w-[19px] bg-[#f0f0f0]" />
          <div className="relative flex-1 min-w-0 h-[19px] overflow-hidden bg-white border-b-2 border-[#858585]">
            <div className="absolute inset-y-0 left-0 w-[236px] bg-[#a0a0a0]" />
            <div className="absolute inset-y-0 left-[1106px] right-0 bg-[#a0a0a0]" />
            <div className="relative flex h-full">
              {rulerMarks.map((mark) => (
                <div key={mark} className="w-[117px] mr-px h-full shrink-0 flex flex-col items-center justify-between text-[10px] leading-[13px]">
                  {mark}
                  <span className="w-px h-1 bg-black" />
                </div>
              ))}
            </div>
            <div className="absolute inset-y-0 left-[851px] w-px bg-black" />
            <svg className="absolute top-0 left-[231px] w-[10px] h-[9px]" viewBox="0 0 10 9"><path d="M1 .5h8v4L5 8.500 1 4.500z" fill="#e6e6e6" stroke="#111" /></svg>
            <svg className="absolute top-0 left-[1101px] w-[10px] h-[9px]" viewBox="0 0 10 9"><path d="M1 .5h8v4L5 8.500 1 4.500z" fill="#e6e6e6" stroke="#111" /></svg>
          </div>
        </div>

        <div className="flex flex-1 min-h-0">
          {/* Vertical ruler */}
          <div className="relative w-[19px] shrink-0 overflow-hidden bg-white border-r border-[#858585]">
            <div className="absolute inset-x-0 top-0 h-[63px] bg-[#a0a0a0]" />
            <div className="relative -mt-[57px] pl-[2px]">
              {rulerMarks.slice(1, 8).map((mark) => (
                <div key={mark} className="h-[118px] flex items-center justify-between text-[10px] leading-[13px]">
                  <span className="[writing-mode:vertical-rl] rotate-180">{mark}</span>
                  <span className="h-px w-1 bg-black shrink-0" />
                </div>
              ))}
            </div>
            <div className="absolute inset-x-0 top-[689px] h-px bg-black" />
            <svg className="absolute left-0 top-[59px] w-[9px] h-[10px]" viewBox="0 0 9 10"><path d="M.5 1h4L8.500 5 4.500 9h-4z" fill="#e6e6e6" stroke="#111" /></svg>
          </div>
          <div className="flex flex-1 min-w-0 flex-col bg-[#f0f0f0]">
            <div className="flex flex-1 min-h-0">
              <Canvas />
              <div className="w-5 shrink-0 pl-[7px] pt-[42px]">
                <div className="w-[6px] h-[311px] bg-[#858585]" />
              </div>
            </div>
            <div className="h-[21px] pl-[26px] pr-[101px] pt-2">
              <div className="h-[6px] bg-[#858585]" />
            </div>
          </div>
        </div>
      </div>
    </main>
  );
}

/* ---------- Right hand docks ---------- */

const propertyRows = [
  { name: 'Name', value: 'nameOfSheet', style: 'font-bold', shade: 'bg-[#f4f4f4]' },
  { name: 'Type', value: 'InfoNode', style: 'font-bold text-[#808080]', shade: 'bg-white text-[#808080]' },
  { name: 'Class', value: '', style: '', shade: 'bg-[#f4f4f4]' },
  { name: 'Comment', value: '', style: '', shade: 'bg-white' },
];

function PropertyGroup({ title }: { title: string }) {
  return (
    <tr className="h-[29px] bg-[#a0a0a4] border-b border-[#d4d4d4]">
      <th colSpan={2} className="text-left font-bold">
        <span className="flex items-center gap-[7px]">
          <ChevronDown className="w-4 h-4" strokeWidth={1.5} />
          {title}
        </span>
      </th>
    </tr>
  );
}

function PropertiesDock() {
  return (
    <section className="flex flex-col flex-1 min-h-0">
      <DockTitle title="Properties" />
      <div className="flex flex-1 min-h-0 mt-[3px] border border-[#82878f] bg-white">
        <div className="flex-1">
          <table className="w-full table-fixed border-collapse">
            <thead>
              <tr className="h-[31px]">
                <th className="w-[214px] text-left font-normal pl-[5px] border-r border-[#e5e5e5]">Name</th>
                <th className="text-left font-normal pl-[5px]">Value</th>
              </tr>
            </thead>
            <tbody>
              <PropertyGroup title="Object" />
              {propertyRows.map((row) => (
                <tr key={row.name} className={`h-[29px] border-b border-[#d4d4d4] ${row.shade}`}>
                  <td className={`pl-[21px] border-r border-[#d4d4d4] ${row.style}`}>{row.name}</td>
                  <td className="pl-[3px]">{row.value}</td>
                </tr>
              ))}
              <PropertyGroup title="Miscellaneous" />
              <tr className="h-[29px] border-b border-[#d4d4d4]">
                <td className="pl-[18px] border-r border-[#d4d4d4]">
                  <div className="h-7 bg-[#0078d7] text-white font-bold pl-[3px] leading-7">Value</div>
                </td>
                <td>
                  <div className="flex items-center gap-[2px] pl-px">
                    <input
                      type="text"
                      aria-label="Value"
                      defaultValue=".orders.billlastname.trim()"
                      className="w-[173px] h-7 text-[#1a7fd4] border border-l-0 border-[#ececec] border-b-[#868686] outline-none"
                    />
                    <button aria-label="Reset value" className="w-[18px] h-[18px] border border-[#d0d0d0] rounded-sm flex items-center justify-center"><Icon name="revert" /></button>
                    <button aria-label="Edit expression" className="w-[18px] h-[18px] border border-[#d0d0d0] rounded-sm text-[10px] leading-4 italic font-bold text-[#2593c8]">fx</button>
                  </div>
                </td>
              </tr>
            </tbody>
          </table>
        </div>
        <div className="w-[21px] flex flex-col items-center justify-between py-[7px] bg-[#f0f0f0]">
          <svg viewBox="0 0 10 8" className="w-[10px] h-2"><path d="M0 8L5 0l5 8z" fill="#a0a0a0" /></svg>
          <svg viewBox="0 0 10 8" className="w-[10px] h-2"><path d="M0 0l5 8 5-8z" fill="#a0a0a0" /></svg>
        </div>
      </div>
    </section>
  );
}

function StructureDock() {
  return (
    <section className="flex flex-col h-[441px] shrink-0 mb-[6px]">
      <DockTitle title="Report Structure" />
      <div className="flex flex-col flex-1 min-h-0 mt-[2px] border border-[#82878f] bg-[#f0f0f0]">
        <div className="flex flex-1 min-h-0">
          <Tree nodes={reportTree} />
          <div className="w-[21px] shrink-0 pl-[7px] pt-[228px]">
            <div className="w-[6px] h-[135px] bg-[#858585]" />
          </div>
        </div>
        <div className="h-5 pl-[21px] pt-[7px] shrink-0">
          <div className="w-[349px] h-[6px] bg-[#858585]" />
        </div>
      </div>
    </section>
  );
}

/* ---------- Bottom ---------- */

const errorColumns = ['#', 'Time', 'ID', 'File', 'Location'];

function ErrorsDock() {
  return (
    <section className="flex flex-col h-[212px] shrink-0">
      <DockTitle title="Document Errors" />
      <div className="flex justify-end items-center h-[28px] shrink-0">
        {(['error', 'warning', 'info'] as IconName[]).map((name) => (
          <button key={name} aria-label={name} className="w-[27px] h-[25px] flex items-center justify-center bg-[#cce8ff] border border-[#99d1ff] rounded-sm">
            <Icon name={name} />
          </button>
        ))}
      </div>
      <div className="relative flex-1 bg-white border border-[#82878f]">
        <table className="w-full table-fixed">
          <thead>
            <tr className="h-[32px]">
              {errorColumns.map((column) => (
                <th key={column} className="w-[100px] text-left font-normal pl-[5px] border-r border-[#e2e2e2]">{column}</th>
              ))}
              <th className="text-left font-normal pl-[5px]">Description</th>
            </tr>
          </thead>
        </table>
        <ChevronUp className="absolute top-[-2px] left-[44px] w-3 h-3 text-[#555]" strokeWidth={2} />
      </div>
    </section>
  );
}

function Select({ label, value, width }: { label: string; value: string; width: string }) {
  return (
    <span className={`relative flex items-center ${width}`}>
      <select aria-label={label} className="appearance-none w-full h-[26px] pl-1 bg-[#fdfdfd] border border-[#cfcfcf] rounded-sm">
        <option>{value}</option>
      </select>
      <ChevronDown className="absolute right-1 w-[14px] h-[14px] text-[#444] pointer-events-none" strokeWidth={1.5} />
    </span>
  );
}

function StatusBar() {
  return (
    <footer className="flex items-center h-8 shrink-0 pl-[13px] pr-2 pt-[2px]">
      <span className="pr-3 h-7 leading-[30px] border-r border-[#d0d0d0]">
        C:\Users\vincent.aymonin\Documents\My Genero Files\samples\Reports\OrderReport\OrderReport.4rp
      </span>
      <div className="flex flex-1 items-center justify-end">
        <Icon name="infoGray" />
        <span className="w-px h-7 bg-[#d0d0d0] ml-[7px] mr-1" />
        <Select label="Host" value="Local Host" width="w-[100px]" />
        <span className="mx-[5px]"><Icon name="server" /></span>
        <span className="w-px h-7 bg-[#d0d0d0] mx-1" />
        <Select label="Configuration" value="4.01.06 Desktop" width="w-[175px]" />
        <span className="ml-[5px]"><Icon name="tools" /></span>
      </div>
    </footer>
  );
}

/* ---------- Window ---------- */

const menus: [string, string, string][] = [
  ['', 'F', 'ile'], ['', 'E', 'dit'], ['', 'V', 'iew'], ['', 'D', 'iff'], ['', 'B', 'uild'], ['', 'D', 'ebug'],
  ['Databa', 's', 'e'], ['SC', 'M', ''], ['', 'T', 'ools'], ['', 'W', 'indow'], ['', 'H', 'elp'],
];

export default function App() {
  return (
    <div className="relative h-screen min-h-[800px] flex flex-col overflow-hidden bg-[#f0f0f0] font-['Noto_Sans',sans-serif] text-[14px] leading-5 text-[#111]">
      {/* Taskbar edge */}
      <div className="flex h-[10px] shrink-0 bg-[#dadada]">
        <div className="w-[46px] h-[2px] bg-[#f4f4f4] border-b border-[#c4c4c4]" />
        <div className="flex pl-3">
          {Array.from({ length: 12 }, (_, i) => (
            <div key={i} className="w-11 flex justify-center">
              {i === 6 ? (
                <div className="w-[38px] h-[5px] bg-[#ededed] flex items-center justify-center rounded-b-sm">
                  <div className="w-4 h-[3px] rounded bg-[#0a74d0]" />
                </div>
              ) : i === 5 ? null : (
                <div className="w-[6px] h-[3px] mt-[2px] rounded-full bg-[#7d7d7d]" />
              )}
            </div>
          ))}
        </div>
      </div>

      <header className="flex items-center h-[29px] shrink-0 bg-[#f2f2f2] pl-1 pr-1">
        <svg viewBox="0 0 17 17" className="w-[17px] h-[17px]">
          <rect width="17" height="17" fill="#9d9612" />
          <rect width="17" height="6" fill="#2c1a44" />
          <path d="M0 6.500h17M0 14.500h17M6.500 6v9" stroke="#e5e2b5" />
        </svg>
        <h1 className="flex-1 pl-2">Genero Studio 5.00.00 - Reports</h1>
        <div className="flex">
          <button aria-label="Minimize" className="w-[58px] flex justify-center"><Minus className="w-[14px] h-[14px]" strokeWidth={1.500} /></button>
          <button aria-label="Restore" className="w-[58px] flex justify-center">
            <svg viewBox="0 0 14 14" className="w-[14px] h-[14px]" fill="none" stroke="#111"><rect x="1.500" y="3.500" width="9" height="9" rx="1.500" /><path d="M4 3V2.500C4 2 4.500 1.500 5 1.500h5c1.500 0 2.500 1 2.500 2.500v5c0 .5-.5 1-1 1" /></svg>
          </button>
          <button aria-label="Close" className="w-[58px] flex justify-center"><X className="w-[17px] h-[17px]" strokeWidth={1.500} /></button>
        </div>
      </header>

      <nav className="flex items-center gap-[17px] h-[26px] shrink-0 bg-white pl-[9px] pt-[3px]">
        {menus.map(([before, key, after]) => (
          <button key={before + key + after}>
            {before}
            <span className="underline underline-offset-2">{key}</span>
            {after}
          </button>
        ))}
      </nav>
      <div className="shrink-0 border-t border-[#e0e0e0]">
        <Toolbar groups={topTools} />
        <Toolbar groups={runTools} />
      </div>

      <div className="flex flex-1 min-h-0 pt-px pl-px pr-px">
        <ProjectsDock />
        <div className="flex flex-1 min-w-0 pl-[7px] pr-[6px] pb-[2px]">
          <Designer />
        </div>
        <div className="w-[453px] flex flex-col shrink-0">
          <StructureDock />
          <PropertiesDock />
        </div>
      </div>
      <div className="h-[6px] shrink-0" />
      <div className="px-px">
        <ErrorsDock />
      </div>
      <StatusBar />
      <div className="absolute left-0 top-[10px] w-px h-[518px] bg-[#333]" />
      <div className="absolute right-0 top-[10px] w-px h-[1040px] bg-[#333]" />
    </div>
  );
}
